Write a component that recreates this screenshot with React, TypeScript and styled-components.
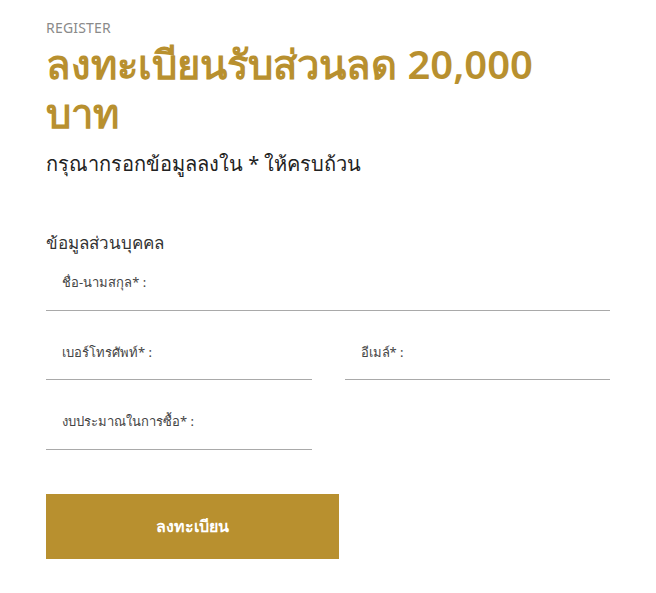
import styled, { createGlobalStyle } from 'styled-components';

const GlobalStyle = createGlobalStyle`
  * { box-sizing: border-box; }
  body {
    margin: 0;
    background: #ffffff;
    font-family: 'Noto Sans', 'Liberation Sans', sans-serif;
  }
`;

const Page = styled.div`
  width: 656px;
  padding: 18px 46px 30px 46px;
`;

const Eyebrow = styled.p`
  margin: 0;
  font-size: 14px;
  line-height: 20px;
  color: #8a8a8a;
  letter-spacing: 0.2px;
`;

const Title = styled.h1`
  margin: 1px 0 0;
  width: 520px;
  font-size: 40px;
  line-height: 49px;
  font-weight: 600;
  color: #b8902f;
`;

const Subtitle = styled.p`
  margin: 13px 0 0;
  font-size: 20px;
  line-height: 28px;
  color: #222;
`;

const SectionTitle = styled.h2`
  margin: 53px 0 0;
  font-size: 17px;
  line-height: 24px;
  font-weight: 400;
  color: #333;
`;

const Row = styled.div<{ $cols: number; $first?: boolean }>`
  display: grid;
  grid-template-columns: ${({ $cols }) => ($cols === 2 ? '1fr 1fr' : '1fr')};
  column-gap: 33px;
  margin-top: ${({ $first }) => ($first ? '7px' : '21px')};
`;

const Field = styled.label<{ $pb: number }>`
  display: block;
  width: 100%;
  border-bottom: 1px solid #a9a9a9;
  padding: 10px 16px ${({ $pb }) => $pb}px;
  font-size: 13px;
  line-height: 20px;
  color: #444;
`;

const SubmitButton = styled.button`
  margin-top: 44px;
  width: 293px;
  height: 65px;
  border: 0;
  background: #b8902f;
  color: #fff;
  font-family: inherit;
  font-size: 16px;
  font-weight: 700;
  cursor: pointer;
`;

export default function App() {
  return (
    <>
      <GlobalStyle />
      <Page>
        <Eyebrow>REGISTER</Eyebrow>
        <Title>ลงทะเบียนรับส่วนลด 20,000 บาท</Title>
        <Subtitle>กรุณากรอกข้อมูลลงใน * ให้ครบถ้วน</Subtitle>
        <SectionTitle>ข้อมูลส่วนบุคคล</SectionTitle>
        <Row $cols={1} $first>
          <Field $pb={18}>ชื่อ-นามสกุล* :</Field>
        </Row>
        <Row $cols={2}>
          <Field $pb={17}>เบอร์โทรศัพท์* :</Field>
          <Field $pb={17}>อีเมล์* :</Field>
        </Row>
        <Row $cols={2}>
          <Field $pb={18}>งบประมาณในการซื้อ* :</Field>
        </Row>
        <SubmitButton type="button">ลงทะเบียน</SubmitButton>
      </Page>
    </>
  );
}
